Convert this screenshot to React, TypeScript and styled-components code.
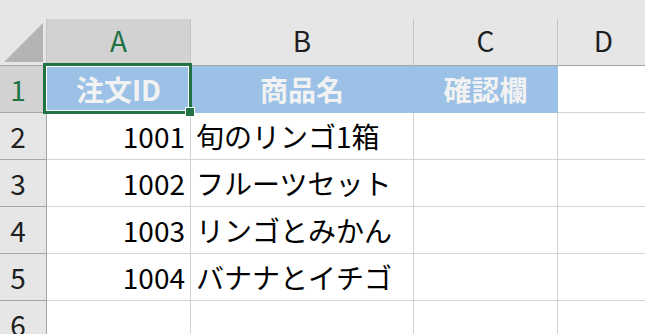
import React from "react";
import styled, { createGlobalStyle } from "styled-components";

const GlobalStyle = createGlobalStyle`
  html, body {
    margin: 0;
    padding: 0;
    background: #ffffff;
    overflow: hidden;
  }
  body {
    font-family: "Noto Sans CJK JP", "Noto Sans", sans-serif;
  }
`;

const GREEN = "#217346";
const BLUE = "#9bc2e6";
const GRID = "#d4d4d4";
const HEAD_BG = "#e6e6e6";
const HEAD_SEL = "#d2d2d2";
const HEAD_LINE = "#a6a6a6";
const HEAD_SEP = "#c4c4c4";

const Sheet = styled.div`
  display: grid;
  grid-template-columns: 47px 144px 223px 144px 92px;
  grid-template-rows: 19px repeat(7, 47px);
  width: 650px;
  font-family: "Noto Sans CJK JP", "Noto Sans", sans-serif;
`;

const TopBand = styled.div`
  grid-column: 1 / -1;
  background: ${HEAD_BG};
`;

const Corner = styled.div`
  background: ${HEAD_BG};
  border-right: 1px solid ${HEAD_SEP};
  border-bottom: 1px solid ${HEAD_LINE};
  box-sizing: border-box;
  display: flex;
  align-items: flex-end;
  justify-content: flex-end;
  padding: 0 3px 3px 0;
`;

const ColHeader = styled.div<{ $selected?: boolean }>`
  box-sizing: border-box;
  background: ${(p) => (p.$selected ? HEAD_SEL : HEAD_BG)};
  color: ${(p) => (p.$selected ? GREEN : "#1f1f1f")};
  border-right: 1px solid ${HEAD_SEP};
  border-bottom: 1px solid ${HEAD_LINE};
  display: flex;
  align-items: center;
  justify-content: center;
  font-size: 28px;
  padding-bottom: 4px;
`;

const RowHeader = styled.div<{ $selected?: boolean }>`
  box-sizing: border-box;
  background: ${(p) => (p.$selected ? HEAD_SEL : HEAD_BG)};
  color: ${(p) => (p.$selected ? GREEN : "#1f1f1f")};
  border-right: 1px solid ${HEAD_LINE};
  border-bottom: 1px solid ${HEAD_LINE};
  display: flex;
  align-items: center;
  justify-content: center;
  padding-right: 10px;
  font-size: 28px;
`;

const Cell = styled.div<{ $fill?: boolean; $align?: "left" | "right" | "center"; $bold?: boolean }>`
  position: relative;
  box-sizing: border-box;
  background: ${(p) => (p.$fill ? BLUE : "#ffffff")};
  border-right: 1px solid ${(p) => (p.$fill ? BLUE : GRID)};
  border-bottom: 1px solid ${(p) => (p.$fill ? BLUE : GRID)};
  display: flex;
  align-items: center;
  justify-content: ${(p) =>
    p.$align === "right" ? "flex-end" : p.$align === "center" ? "center" : "flex-start"};
  padding: 0 5px 0 5px;
  font-size: 28px;
  font-weight: ${(p) => (p.$bold ? 700 : 400)};
  color: ${(p) => (p.$bold ? "#f2f2f2" : "#000000")};
  white-space: nowrap;
  overflow: visible;
`;

const Selection = styled.div`
  position: absolute;
  left: -4px;
  top: -3px;
  right: -2px;
  bottom: -2px;
  border: 3px solid ${GREEN};
  box-shadow: inset 0 0 0 1px #ffffff;
  pointer-events: none;
  z-index: 2;
`;

const FillHandle = styled.div`
  position: absolute;
  right: -6px;
  bottom: -6px;
  width: 8px;
  height: 8px;
  background: ${GREEN};
  border: 1px solid #ffffff;
`;

const CornerTriangle = () => (
  <svg width="39" height="39" viewBox="0 0 39 39">
    <polygon points="39,0 39,39 0,39" fill="#b4b4b4" />
  </svg>
);

const columns = ["A", "B", "C", "D"];
const header = ["注文ID", "商品名", "確認欄"];
const rows: [string, string][] = [
  ["1001", "旬のリンゴ1箱"],
  ["1002", "フルーツセット"],
  ["1003", "リンゴとみかん"],
  ["1004", "バナナとイチゴ"],
];

export default function App() {
  return (
    <>
      <GlobalStyle />
      <Sheet>
        <TopBand />
        <Corner>
          <CornerTriangle />
        </Corner>
        {columns.map((c) => (
          <ColHeader key={c} $selected={c === "A"}>
            {c}
          </ColHeader>
        ))}

        <RowHeader $selected>1</RowHeader>
        {header.map((h, i) => (
          <Cell key={h} $fill $bold $align="center">
            {h}
            {i === 0 && (
              <Selection>
                <FillHandle />
              </Selection>
            )}
          </Cell>
        ))}
        <Cell />

        {rows.map(([id, name], i) => (
          <React.Fragment key={id}>
            <RowHeader>{i + 2}</RowHeader>
            <Cell $align="right">{id}</Cell>
            <Cell>{name}</Cell>
            <Cell />
            <Cell />
          </React.Fragment>
        ))}

        <RowHeader>6</RowHeader>
        <Cell />
        <Cell />
        <Cell />
        <Cell />
      </Sheet>
    </>
  );
}
